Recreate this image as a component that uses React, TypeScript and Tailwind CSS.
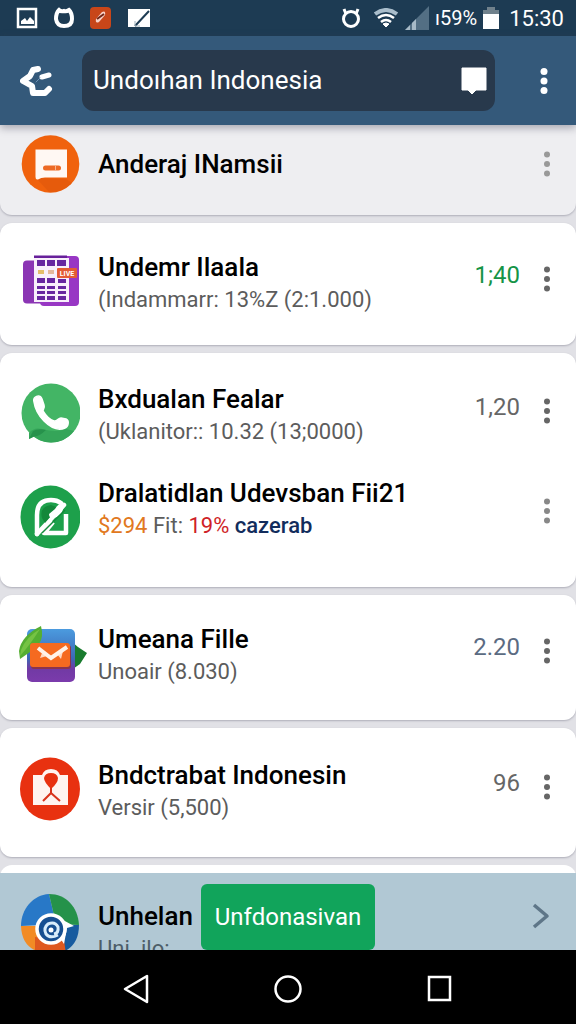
import React from 'react';

const DotsIcon: React.FC<{ radius?: number; className?: string }> = ({ radius = 3, className }) => (
  <svg viewBox="0 0 24 32" className={`h-8 w-6 ${className ?? ''}`} fill="currentColor" aria-hidden="true">
    <circle cx="12" cy="6.5" r={radius} />
    <circle cx="12" cy="16" r={radius} />
    <circle cx="12" cy="25.5" r={radius} />
  </svg>
);

const ChatCircleIcon = () => (
  <svg viewBox="0 0 60 60" className="size-[60px]" aria-hidden="true">
    <circle cx="30.500" cy="30" r="28.800" fill="#f0620d" />
    <path d="M16 44 L46 45 L52 49 Q42 59 29 58 Z" fill="#dc530b" opacity=".5" />
    <path d="M15.500 15.500H47V43.500H25Q21 43.500 18 45.500Q15.500 46 15.500 43Z" fill="#fff8f3" />
    <rect x="23" y="31.500" width="18" height="5" rx="2.500" fill="#ed6a25" />
    <path d="M35.500 31.500v5" stroke="#f8b48c" strokeWidth="1" />
  </svg>
);

const CalculatorIcon = () => (
  <svg viewBox="0 0 60 60" className="size-[60px]" aria-hidden="true">
    <rect x="3" y="9.500" width="24" height="43" rx="4" fill="#8b35b4" />
    <rect x="20" y="5" width="39" height="50" rx="4" fill="#9837c4" />
    <path d="M14 4.500H47V8H14Z" fill="#67209a" />
    <path d="M14 7H49V51H14Z" fill="#f8effb" />
    <g fill="#6726a0">
      <path d="M17 9h8v6h-8zM27 9h8v6h-8zM37 9h9v6h-9z" />
      <path d="M17 27h8v5h-8zM27 27h8v5h-8zM38 28h8v4h-8z" />
      <path d="M17 35h8v3h-8zM27 35h8v3h-8zM38 35h8v3h-8z" />
      <path d="M17 40h8v3h-8zM27 40h8v3h-8zM38 40h8v3h-8z" />
      <path d="M17 45h8v4h-8zM27 45h8v4h-8zM38 45h8v4h-8z" />
    </g>
    <path d="M18 19h6v4h-6z" fill="#e3bd6a" />
    <path d="M28 19h6v4h-6z" fill="#e4b99d" />
    <rect x="37" y="17" width="20" height="10" rx="1" fill="#e45c35" />
    <text x="47" y="24.500" textAnchor="middle" fontSize="7" fontWeight="700" fill="#fff">LIVE</text>
  </svg>
);

const PhoneCircleIcon = () => (
  <svg viewBox="0 0 60 60" className="size-[60px]" aria-hidden="true">
    <circle cx="31" cy="30" r="29.500" fill="#43b565" />
    <path d="M9 50 Q14 44 22 46 Q36 50 46 46 L54 48 Q45 59.500 31 59.500 Q20 59 14 53.500 L9 56 Z" fill="#35a559" />
    <path d="M9 56L13 48Q18 45 26 47Q20 53 14 53.500Z" fill="#27924c" />
    <path
      d="M14 19C12 13 20 11 22 16L24 22C25 25 23 26 23 28C26 33 30 37 34 38C37 39 38 35 41 35L46 36C50 38 48 44 45 45C38 48 30 44 24 38C18 32 15 26 14 19Z"
      fill="#fff"
      stroke="#fff"
      strokeWidth="1.500"
    />
  </svg>
);

const LeafCircleIcon = () => (
  <svg viewBox="0 0 60 64" className="h-16 w-[60px]" aria-hidden="true">
    <ellipse cx="30.500" cy="32" rx="30" ry="31.500" fill="#1da04b" />
    <path d="M17 49V30Q17 15 31 15Q37 15 41 18" fill="none" stroke="#fff" strokeWidth="4.500" strokeLinecap="round" />
    <path d="M46 29V48H24L33 37" fill="none" stroke="#fff" strokeWidth="4.500" strokeLinejoin="round" />
    <path d="M17 49L44 20" stroke="#fff" strokeWidth="4.500" strokeLinecap="round" />
    <path d="M22 33Q19 22 31 20L36 22Q37 28 31 31L25 38Z" fill="#13883a" />
    <path d="M29 29L35 24Q38 18 44 18Q44 30 34 33Q29 34 29 29Z" fill="#fff" />
    <path d="M22 48L45 25" stroke="#138a3b" strokeWidth="1.500" />
  </svg>
);

const MailIcon = () => (
  <svg viewBox="0 0 60 60" className="size-[60px] overflow-visible" aria-hidden="true">
    <defs>
      <linearGradient id="mail-bg" x1="0" y1="0" x2="0" y2="1">
        <stop offset="0" stopColor="#4b9bdf" />
        <stop offset=".55" stopColor="#3d69b5" />
        <stop offset=".75" stopColor="#713aa4" />
        <stop offset="1" stopColor="#7b3bac" />
      </linearGradient>
    </defs>
    <path d="M52 19L58 24L67 30L60 41L50 48Z" fill="#197b2e" />
    <rect x="7" y="6" width="48" height="53" rx="5" fill="url(#mail-bg)" />
    <path d="M-1 28Q1 13 21 3Q24 14 19 21Q10 30 0 36Z" fill="#55ae32" />
    <path d="M0 33Q10 22 20 6Q6 14 1 27Z" fill="#75c344" />
    <rect x="11" y="22" width="40" height="24" rx="3" fill="#8b344d" />
    <rect x="10" y="20" width="40" height="24" rx="3" fill="#f56a20" />
    <path d="M22 30L20 35L27 33ZM37 31L41 36L43 28Z" fill="#ffd9c2" />
    <path d="M18 25L31 35L47 24" fill="none" stroke="#fff2e8" strokeWidth="4" />
  </svg>
);

const PinCircleIcon = () => (
  <svg viewBox="0 0 60 64" className="h-16 w-[60px]" aria-hidden="true">
    <ellipse cx="30" cy="32" rx="30" ry="31.500" fill="#e83110" />
    <path d="M13 18H22Q24 12 31 12Q38 12 40 18H48V48H13Z" fill="#fff4f0" />
    <path d="M31 32Q24 25 24 21Q25 16 31 16Q37 16 38 21Q38 26 31 32Z" fill="#e83110" />
    <path d="M31 31V36L23 44M31 36L40 44" fill="none" stroke="#d8331b" strokeWidth="2" />
  </svg>
);

const BirdCircleIcon = () => (
  <svg viewBox="0 0 60 60" className="size-[60px]" aria-hidden="true">
    <path d="M1 32C1 15 13 1 29 0L36 30Z" fill="#2878c7" />
    <path d="M29 0C46 0 58 13 59 31L36 30Z" fill="#25924a" />
    <path d="M59 31Q59 51 43 58L34 31Z" fill="#175b9f" />
    <path d="M1 32H28L34 60Q2 60 1 32Z" fill="#f28b25" />
    <path d="M15 43L44 46L46 60H15Z" fill="#df5920" />
    <path d="M43 26L54 32L47 34L44 50L40 44Z" fill="#fff" />
    <circle cx="31" cy="35" r="14" fill="#164f91" stroke="#fff" strokeWidth="3.500" />
    <path d="M38 41Q30 45 26 40Q23 34 28 30Q35 27 38 33Q39 39 34 40" fill="none" stroke="#d8edfb" strokeWidth="3" />
    <circle cx="31" cy="36" r="2.500" fill="#fff" />
  </svg>
);

const StatusBar = () => (
  <div className="flex h-9 shrink-0 items-center justify-between bg-[#1d3b53] pr-3 pl-4 text-white">
    <div className="flex items-center gap-4">
      <svg viewBox="0 0 22 22" className="size-[22px]" aria-hidden="true">
        <path d="M2 2H20V20H2Z" fill="none" stroke="#fff" strokeWidth="2.500" />
        <path d="M5 17V14L9 11L11 14L14 10L18 14V17Z" fill="#fff" />
      </svg>
      <svg viewBox="0 0 20 22" className="h-[22px] w-5" aria-hidden="true">
        <path d="M5 3Q2 6 2 12Q3 19 10 19Q18 19 18 12Q18 6 15 3Q12 5 10 4Q7 5 5 3Z" fill="none" stroke="#fff" strokeWidth="4" />
      </svg>
      <svg viewBox="0 0 22 22" className="size-[22px]" aria-hidden="true">
        <rect width="21" height="22" rx="4" fill="#c84619" />
        <path d="M6 12L12 5Q16 3 15 8L9 15Q5 17 6 12Z" fill="#f9d2c7" />
        <path d="M7 12L14 7" stroke="#712718" strokeWidth="2" />
      </svg>
      <svg viewBox="0 0 22 20" className="h-5 w-[22px]" aria-hidden="true">
        <path d="M0 1H22V19H0Z" fill="#fff" />
        <path d="M7 18L21 3" stroke="#1d3b53" strokeWidth="2" />
        <path d="M7 13V18H12" fill="none" stroke="#9eafb9" />
      </svg>
    </div>
    <div className="flex items-center">
      <svg viewBox="0 0 20 22" className="mr-3 h-[22px] w-5" aria-hidden="true">
        <circle cx="10" cy="12" r="7.500" fill="none" stroke="#fff" strokeWidth="3" />
        <path d="M3 2L5 7M17 2L15 7" stroke="#fff" strokeWidth="3" />
      </svg>
      <svg viewBox="0 0 26 20" className="mr-1.5 h-5 w-[26px]" fill="none" stroke="#fff" aria-hidden="true">
        <path d="M2 6Q13 -2 24 6" stroke="#a9bdcb" strokeWidth="4" />
        <path d="M5 10Q13 4 21 10M8 14Q13 10 18 14" strokeWidth="2.500" />
        <path d="M10 16Q13 14 16 16L13 19Z" fill="#fff" strokeWidth="1" />
      </svg>
      <svg viewBox="0 0 24 24" className="mr-1.5 size-6" aria-hidden="true">
        <path d="M0 24L24 0V24Z" fill="#536f84" />
        <path d="M0 24L5 19V24ZM7 24V17L11 13V24Z" fill="#a7bac7" />
      </svg>
      <span className="text-xl">ı59%</span>
      <svg viewBox="0 0 16 22" className="mx-1.5 h-[22px] w-4" aria-hidden="true">
        <path d="M0 3H4V0H12V3H16V8H0Z" fill="#70818c" />
        <path d="M0 7H16V22H0Z" fill="#fff" />
      </svg>
      <span className="ml-1 text-[22px]">15:30</span>
    </div>
  </div>
);

const Header = () => (
  <header className="relative z-10 flex h-[89px] shrink-0 items-center bg-[#34597a] px-5 text-white shadow-[0_3px_8px_rgba(60,60,80,0.4)]">
    <button aria-label="Back" className="w-[34px]">
      <svg viewBox="0 0 34 32" className="h-8 w-[34px]" fill="none" stroke="#fff" strokeLinecap="round" strokeLinejoin="round" aria-hidden="true">
        <path d="M18 4L13 5L10 11L3 16L12 21L13 28H25L29 24" strokeWidth="6" />
        <path d="M22 12L29 10" strokeWidth="5" />
        <path d="M20 13L16 17" stroke="#7194b5" strokeWidth="1" />
      </svg>
    </button>
    <div className="ml-7 flex h-[61px] min-w-0 flex-1 items-center rounded-xl bg-[#28394c] pr-2 pl-[11px]">
      <input aria-label="Search" defaultValue="Undoıhan Indonesia" className="min-w-0 flex-1 bg-transparent text-[26px] outline-none" />
      <button aria-label="Messages">
        <svg viewBox="0 0 26 28" className="h-7 w-[26px]" fill="#fff" aria-hidden="true">
          <path d="M1 1H25V23H15L11 27L7 23H1Z" stroke="#fff" strokeLinejoin="round" />
        </svg>
      </button>
    </div>
    <button aria-label="More options" className="ml-[37px]">
      <DotsIcon radius={3.5} />
    </button>
  </header>
);

interface RowProps {
  icon: React.ReactNode;
  title: string;
  subtitle?: React.ReactNode;
  value?: string;
  valueColor?: string;
  dotsColor?: string;
  low?: boolean;
}

const Row: React.FC<RowProps> = ({ icon, title, subtitle, value, valueColor = 'text-[#666]', dotsColor = 'text-[#666]', low }) => (
  <div className="flex items-start pr-[17px] pl-5">
    <div className={`flex w-[60px] shrink-0 items-center ${low ? 'mt-2 h-16' : 'h-[60px]'}`}>{icon}</div>
    <div className="ml-[18px] min-w-0 flex-1 whitespace-nowrap">
      <h2 className="text-[26px] leading-8 font-medium text-black">{title}</h2>
      <p className="text-[22px] leading-[34px] text-[#5c5c5c]">{subtitle}</p>
    </div>
    {value && <span className={`mt-2 text-2xl leading-8 ${valueColor}`}>{value}</span>}
    <button aria-label={`Options for ${title}`} className={`ml-[15px] ${low ? 'mt-[18px]' : 'mt-3'} ${dotsColor}`}>
      <DotsIcon />
    </button>
  </div>
);

const card = 'shrink-0 rounded-xl bg-white shadow-[0_1px_2px_rgba(80,80,100,0.35)]';

export default function App() {
  return (
    <div className="flex h-screen flex-col overflow-hidden bg-[#e1e1e6] font-['Roboto','Liberation_Sans',sans-serif]">
      <StatusBar />
      <Header />
      <main className="flex min-h-0 flex-1 flex-col gap-2 overflow-hidden">
        <section className="flex h-[90px] shrink-0 items-center rounded-b-xl bg-[#eeeef1] pr-[17px] pb-3 pl-5 shadow-[0_1px_2px_rgba(80,80,100,0.35)]">
          <ChatCircleIcon />
          <h2 className="ml-[18px] flex-1 text-[26px] leading-8 font-medium whitespace-nowrap text-black">Anderaj INamsii</h2>
          <button aria-label="Options for Anderaj INamsii" className="text-[#999]">
            <DotsIcon />
          </button>
        </section>
        <section className={`${card} py-7`}>
          <Row icon={<CalculatorIcon />} title="Undemr Ilaala" subtitle="(Indammarr: 13%Z (2:1.000)" value="1;40" valueColor="text-[#159447]" />
        </section>
        <section className={`${card} flex flex-col gap-7 pt-[30px] pb-[38px]`}>
          <Row icon={<PhoneCircleIcon />} title="Bxdualan Fealar" subtitle="(Uklanitor:: 10.32 (13;0000)" value="1,20" />
          <Row
            low
            icon={<LeafCircleIcon />}
            title="Dralatidlan Udevsban Fii21"
            subtitle={
              <>
                <span className="text-[#e17820]">$294</span> Fit: <span className="text-[#cf1f27]">19%</span>{' '}
                <span className="font-medium text-[#122c5c]">cazerab</span>
              </>
            }
            dotsColor="text-[#888]"
          />
        </section>
        <section className={`${card} pt-7 pb-[31px]`}>
          <Row icon={<MailIcon />} title="Umeana Fille" subtitle="Unoair (8.030)" value="2.20" valueColor="text-[#5b6b82]" />
        </section>
        <section className={`${card} pt-[31px] pb-8`}>
          <Row icon={<PinCircleIcon />} title="Bndctrabat Indonesin" subtitle="Versir (5,500)" value="96" />
        </section>
        <section className="flex min-h-0 flex-1 flex-col rounded-t-xl bg-white pt-2">
          <div className="relative flex min-h-0 flex-1 items-start overflow-hidden bg-[#b1c8d4] px-5">
            <div className="mt-[21px] shrink-0">
              <BirdCircleIcon />
            </div>
            <div className="mt-[27px] ml-[18px] flex-1 whitespace-nowrap">
              <h2 className="text-[26px] leading-8 font-medium text-black">Unhelan I</h2>
              <p className="text-[22px] leading-[34px] text-[#4d5d68]">Uni. ilo:</p>
            </div>
            <button aria-label="Next" className="mt-[27px]">
              <svg viewBox="0 0 30 32" className="h-8 w-[30px]" fill="none" stroke="#5e7688" strokeWidth="3.500" aria-hidden="true">
                <path d="M8 5L21 16L8 27" strokeLinejoin="round" />
              </svg>
            </button>
            <button className="absolute inset-x-0 bottom-0 mx-auto h-[66px] w-fit rounded-md bg-[#11a45b] px-3.5 text-2xl text-white">
              Unfdonasivan
            </button>
          </div>
        </section>
      </main>
      <nav className="flex h-[74px] shrink-0 items-center justify-center gap-[120px] bg-black pt-1">
        <button aria-label="Back">
          <svg viewBox="0 0 32 32" className="size-8" fill="none" stroke="#fff" strokeWidth="2.500" strokeLinejoin="round" aria-hidden="true">
            <path d="M27 3V29L5 16Z" />
          </svg>
        </button>
        <button aria-label="Home">
          <svg viewBox="0 0 32 32" className="size-8" fill="none" stroke="#fff" strokeWidth="2.500" aria-hidden="true">
            <circle cx="16" cy="16" r="12.500" />
          </svg>
        </button>
        <button aria-label="Recent apps">
          <svg viewBox="0 0 32 32" className="size-8" fill="none" stroke="#fff" strokeWidth="2.500" aria-hidden="true">
            <path d="M5 4H26V27H5Z" />
          </svg>
        </button>
      </nav>
    </div>
  );
}
